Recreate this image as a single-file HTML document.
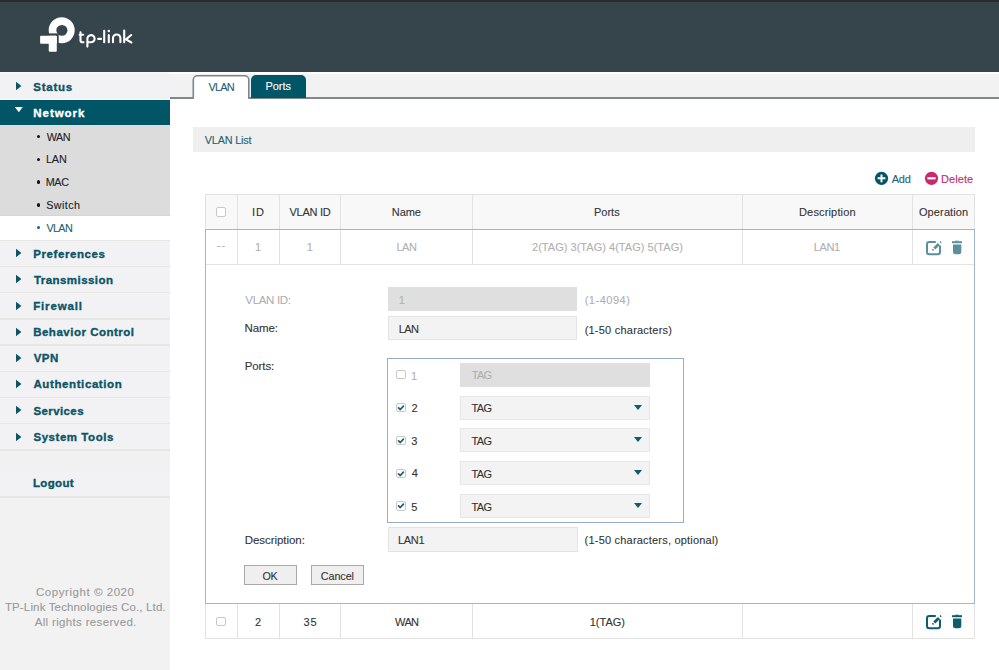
<!DOCTYPE html>
<html><head><meta charset="utf-8"><title>VLAN</title>
<style>
html,body{margin:0;padding:0;width:999px;height:670px;overflow:hidden;background:#fff}
body{position:relative;font-family:"Liberation Sans",sans-serif}
.a{position:absolute;box-sizing:content-box}
.t{position:absolute;white-space:nowrap;line-height:14px}
</style></head><body>
<div class="a" style="left:0px;top:0px;width:999px;height:72px;background:#36444b"></div>
<div class="a" style="left:0px;top:0px;width:999px;height:2px;background:#2a2c2e"></div>
<svg class="a" style="left:0;top:0" width="200" height="72" viewBox="0 0 200 72">
<path fill="#fff" fill-rule="evenodd" d="M48.7 30.25 A13 13 0 1 1 74.7 30.25 A13 13 0 1 1 48.7 30.25 Z M56.3 30.35 A5.6 5.4 0 1 0 67.5 30.35 A5.6 5.4 0 1 0 56.3 30.35 Z"/>
<rect x="38" y="33.4" width="20.7" height="22" fill="#36444b"/>
<rect x="40.1" y="35.65" width="16.7" height="8" rx="1" fill="#fff"/>
<rect x="48.75" y="35.65" width="8.05" height="16.1" rx="1" fill="#fff"/>
<g fill="none" stroke="#fff" stroke-width="2.1" stroke-linecap="round" stroke-linejoin="round">
<path d="M80.5 32.3 V40.2 Q80.5 42.3 82.6 42.3 H83.5 M79.6 34.8 H83.2"/>
<path d="M87.4 46.6 V38.8 A3.6 3.6 0 1 1 91 42.3 H87.6"/>
<path d="M98.2 38.9 H101"/>
<path d="M104.2 30.9 V42.3"/>
<path d="M108.8 35.1 V42.3"/>
<path d="M113 42.3 V38.2 A3.7 3.7 0 0 1 120.4 38.2 V42.3"/>
<path d="M124.2 30.6 V42.3 M131.2 35 L126 39.4 L131.4 42.5"/>
</g>
<circle cx="108.8" cy="31" r="1.25" fill="#fff"/>
</svg>
<div class="a" style="left:0px;top:72px;width:170px;height:598px;background:#f2f2f4"></div>
<div class="a" style="left:0px;top:72px;width:170px;height:2px;background:#f8f8f9"></div>
<svg class="a" style="left:10px;top:76.1px" width="20" height="20" viewBox="10 76.1 20 20"><polygon points="16,81.94999999999999 21.4,86.1 16,90.25" fill="#0b5566"/></svg>
<div class="a" style="left:0px;top:98.6px;width:170px;height:1.4000000000000057px;background:#fbf8f8"></div>
<div class="a" style="left:0px;top:100px;width:170px;height:25px;background:#005566"></div>
<svg class="a" style="left:10px;top:100px" width="20" height="20" viewBox="10 100 20 20"><polygon points="14.8,107 22.8,107 18.8,112.3" fill="#fff"/></svg>
<div class="a" style="left:0px;top:125px;width:170px;height:91px;background:#dcdcdc"></div>
<div class="a" style="left:0px;top:215px;width:170px;height:1px;background:#d5d5d5"></div>
<div class="a" style="left:0px;top:216px;width:170px;height:24px;background:#ffffff"></div>
<div class="a" style="left:36.9px;top:134.8px;width:3.4px;height:3.4px;border-radius:50%;background:#111"></div>
<div class="a" style="left:36.9px;top:157.60000000000002px;width:3.4px;height:3.4px;border-radius:50%;background:#111"></div>
<div class="a" style="left:36.9px;top:180.4px;width:3.4px;height:3.4px;border-radius:50%;background:#111"></div>
<div class="a" style="left:36.9px;top:203.20000000000002px;width:3.4px;height:3.4px;border-radius:50%;background:#111"></div>
<div class="a" style="left:36.9px;top:226.10000000000002px;width:3.4px;height:3.4px;border-radius:50%;background:#1d6172"></div>
<div class="a" style="left:0px;top:239.5px;width:170px;height:1.5px;background:#e6e6e4"></div>
<svg class="a" style="left:10px;top:243.1px" width="20" height="20" viewBox="10 243.1 20 20"><polygon points="16,248.95 21.4,253.1 16,257.25" fill="#0b5566"/></svg>
<div class="a" style="left:0px;top:265.7px;width:170px;height:1.5px;background:#e6e6e4"></div>
<svg class="a" style="left:10px;top:269.4px" width="20" height="20" viewBox="10 269.4 20 20"><polygon points="16,275.25 21.4,279.4 16,283.54999999999995" fill="#0b5566"/></svg>
<div class="a" style="left:0px;top:291.9px;width:170px;height:1.5px;background:#e6e6e4"></div>
<svg class="a" style="left:10px;top:295.59999999999997px" width="20" height="20" viewBox="10 295.59999999999997 20 20"><polygon points="16,301.45 21.4,305.59999999999997 16,309.74999999999994" fill="#0b5566"/></svg>
<div class="a" style="left:0px;top:318.1px;width:170px;height:1.5px;background:#e6e6e4"></div>
<svg class="a" style="left:10px;top:321.8px" width="20" height="20" viewBox="10 321.8 20 20"><polygon points="16,327.65000000000003 21.4,331.8 16,335.95" fill="#0b5566"/></svg>
<div class="a" style="left:0px;top:344.3px;width:170px;height:1.5px;background:#e6e6e4"></div>
<svg class="a" style="left:10px;top:347.8px" width="20" height="20" viewBox="10 347.8 20 20"><polygon points="16,353.65000000000003 21.4,357.8 16,361.95" fill="#0b5566"/></svg>
<div class="a" style="left:0px;top:370.5px;width:170px;height:1.5px;background:#e6e6e4"></div>
<svg class="a" style="left:10px;top:374.2px" width="20" height="20" viewBox="10 374.2 20 20"><polygon points="16,380.05 21.4,384.2 16,388.34999999999997" fill="#0b5566"/></svg>
<div class="a" style="left:0px;top:396.7px;width:170px;height:1.5px;background:#e6e6e4"></div>
<svg class="a" style="left:10px;top:400.3px" width="20" height="20" viewBox="10 400.3 20 20"><polygon points="16,406.15000000000003 21.4,410.3 16,414.45" fill="#0b5566"/></svg>
<div class="a" style="left:0px;top:422.9px;width:170px;height:1.5px;background:#e6e6e4"></div>
<svg class="a" style="left:10px;top:426.59999999999997px" width="20" height="20" viewBox="10 426.59999999999997 20 20"><polygon points="16,432.45 21.4,436.59999999999997 16,440.74999999999994" fill="#0b5566"/></svg>
<div class="a" style="left:0px;top:449.1px;width:170px;height:1.5px;background:#e6e6e4"></div>
<div class="a" style="left:0px;top:451px;width:170px;height:20px;background:#f1f1f1"></div>
<div class="a" style="left:0px;top:496px;width:170px;height:1.5px;background:#e6e6e4"></div>
<div class="a" style="left:0px;top:497.5px;width:170px;height:172.5px;background:#f2f2f2"></div>
<div class="a" style="left:170px;top:74px;width:829px;height:23px;background:#f2f2f2"></div>
<div class="a" style="left:170px;top:97px;width:829px;height:1.5999999999999943px;background:#7d888d"></div>
<svg class="a" style="left:185px;top:70px" width="70" height="32" viewBox="185 70 70 32"><path d="M193.3 98.6 V80 A4.2 4.2 0 0 1 197.5 75.8 H244.6 A4.2 4.2 0 0 1 248.8 80 V98.6" fill="#fff" stroke="#7b868a" stroke-width="1.6"/><rect x="194.2" y="96.9" width="53.8" height="3" fill="#fff"/></svg>
<div class="a" style="left:250.6px;top:74.8px;width:55.4px;height:22.8px;border-radius:5px 5px 0 0;background:#005566"></div>
<div class="a" style="left:192.5px;top:127px;width:782.5px;height:24.599999999999994px;background:#efefef"></div>
<svg class="a" style="left:870px;top:168px" width="110" height="20" viewBox="870 168 110 20">
<circle cx="881.5" cy="178.3" r="6.6" fill="#005566"/>
<path d="M877.6 178.3 H885.4 M881.5 174.4 V182.2" stroke="#fff" stroke-width="2"/>
<circle cx="931.5" cy="178.3" r="6.6" fill="#c8296e"/>
<path d="M927.4 178.3 H935.6" stroke="#fff" stroke-width="2.2"/>
</svg>
<div class="a" style="left:205px;top:194.5px;width:770px;height:35.0px;background:#f8f8f8"></div>
<div class="a" style="left:205px;top:194px;width:770px;height:1px;background:#e2e2e2"></div>
<div class="a" style="left:205px;top:194px;width:1px;height:35.5px;background:#e2e2e2"></div>
<div class="a" style="left:974px;top:194px;width:1px;height:35.5px;background:#e2e2e2"></div>
<div class="a" style="left:236.5px;top:194.5px;width:1.0px;height:69.80000000000001px;background:#e2e2e2"></div>
<div class="a" style="left:236.5px;top:603.5px;width:1.0px;height:34.799999999999955px;background:#e2e2e2"></div>
<div class="a" style="left:278.5px;top:194.5px;width:1.0px;height:69.80000000000001px;background:#e2e2e2"></div>
<div class="a" style="left:278.5px;top:603.5px;width:1.0px;height:34.799999999999955px;background:#e2e2e2"></div>
<div class="a" style="left:340.0px;top:194.5px;width:1.0px;height:69.80000000000001px;background:#e2e2e2"></div>
<div class="a" style="left:340.0px;top:603.5px;width:1.0px;height:34.799999999999955px;background:#e2e2e2"></div>
<div class="a" style="left:471.7px;top:194.5px;width:1.0px;height:69.80000000000001px;background:#e2e2e2"></div>
<div class="a" style="left:471.7px;top:603.5px;width:1.0px;height:34.799999999999955px;background:#e2e2e2"></div>
<div class="a" style="left:741.7px;top:194.5px;width:1.0px;height:69.80000000000001px;background:#e2e2e2"></div>
<div class="a" style="left:741.7px;top:603.5px;width:1.0px;height:34.799999999999955px;background:#e2e2e2"></div>
<div class="a" style="left:912.3px;top:194.5px;width:1.0px;height:69.80000000000001px;background:#e2e2e2"></div>
<div class="a" style="left:912.3px;top:603.5px;width:1.0px;height:34.799999999999955px;background:#e2e2e2"></div>
<div class="a" style="left:205px;top:264px;width:770px;height:1px;background:#e2e2e2"></div>
<div class="a" style="left:205px;top:603.5px;width:1px;height:34.799999999999955px;background:#e2e2e2"></div>
<div class="a" style="left:974px;top:603.5px;width:1px;height:34.799999999999955px;background:#e2e2e2"></div>
<div class="a" style="left:205px;top:638px;width:770px;height:1px;background:#e2e2e2"></div>
<div class="a" style="left:204.6px;top:229px;width:768.8px;height:373.4px;border:1.2px solid #a2b6ca"></div>
<div class="a" style="left:216.3px;top:207.2px;width:7.4px;height:7.4px;border:1.3px solid #c8c8c8;border-radius:2px;background:#fff"></div>
<div class="a" style="left:216.3px;top:616.6px;width:7.4px;height:7.4px;border:1.3px solid #c8c8c8;border-radius:2px;background:#fff"></div>
<svg class="a" style="left:920px;top:238.6px;opacity:0.68" width="50" height="18" viewBox="920 238.6 50 18">
<path d="M935.8 241.5 H929.3 Q927 241.5 927 243.79999999999998 V251.5 Q927 253.79999999999998 929.3 253.79999999999998 H937.7 Q940 253.79999999999998 940 251.5 V245.2" fill="none" stroke="#0f5c6b" stroke-width="2"/>
<path d="M934.3 248.2 L938.9 243.6" stroke="#0f5c6b" stroke-width="2.8"/>
<path d="M932.5 249.9 L933.5 248.9" stroke="#0f5c6b" stroke-width="1.7"/>
<path d="M940.1 242.2 L941.1 241.2" stroke="#0f5c6b" stroke-width="1.5"/>
<rect x="952" y="240.79999999999998" width="10" height="2" fill="#0f5c6b"/>
<rect x="955.3" y="240.29999999999998" width="3.4" height="1" fill="#0f5c6b"/>
<path d="M953 244.0 H961.3 V251.29999999999998 Q961.3 253.79999999999998 958.8 253.79999999999998 H955.5 Q953 253.79999999999998 953 251.29999999999998 Z" fill="#0f5c6b"/>
</svg>
<svg class="a" style="left:920px;top:612.6px;opacity:1" width="50" height="18" viewBox="920 612.6 50 18">
<path d="M935.8 615.5 H929.3 Q927 615.5 927 617.8000000000001 V625.5 Q927 627.8000000000001 929.3 627.8000000000001 H937.7 Q940 627.8000000000001 940 625.5 V619.2" fill="none" stroke="#0f5c6b" stroke-width="2"/>
<path d="M934.3 622.2 L938.9 617.6" stroke="#0f5c6b" stroke-width="2.8"/>
<path d="M932.5 623.9 L933.5 622.9" stroke="#0f5c6b" stroke-width="1.7"/>
<path d="M940.1 616.2 L941.1 615.2" stroke="#0f5c6b" stroke-width="1.5"/>
<rect x="952" y="614.8000000000001" width="10" height="2" fill="#0f5c6b"/>
<rect x="955.3" y="614.3000000000001" width="3.4" height="1" fill="#0f5c6b"/>
<path d="M953 618.0 H961.3 V625.3000000000001 Q961.3 627.8000000000001 958.8 627.8000000000001 H955.5 Q953 627.8000000000001 953 625.3000000000001 Z" fill="#0f5c6b"/>
</svg>
<div class="a" style="left:387.5px;top:287.2px;width:189.89999999999998px;height:24.30000000000001px;background:#dfdfdf"></div>
<div class="a" style="left:387.5px;top:316px;width:187.9px;height:22.4px;border:1px solid #e3e3e3;background:#f3f3f3"></div>
<div class="a" style="left:387.6px;top:527.4px;width:188px;height:22.2px;border:1px solid #e3e3e3;background:#f3f3f3"></div>
<div class="a" style="left:387px;top:358px;width:295px;height:163px;border:1px solid #98afc2;background:#fff"></div>
<div class="a" style="left:460px;top:363px;width:190px;height:24px;background:#dfdfdf"></div>
<div class="a" style="left:396.4px;top:370.1px;width:7.4px;height:7.4px;border:1.3px solid #c8c8c8;border-radius:2px;background:#fff"></div>
<div class="a" style="left:460px;top:396px;width:188px;height:22px;border:1px solid #e6e6e6;background:#f3f3f3"></div>
<div class="a" style="left:634.1px;top:405.1px;width:0;height:0;border-left:4.1px solid transparent;border-right:4.1px solid transparent;border-top:5.0px solid #0f5c6b"></div>
<div class="a" style="left:396.4px;top:402.90000000000003px;width:7.4px;height:7.4px;border:1.3px solid #c8c8c8;border-radius:2px;background:#fff"></div><svg class="a" style="left:396.4px;top:402.90000000000003px" width="10" height="10" viewBox="0 0 10 10"><path d="M2.5 4.9 L4.3 6.5 L7.4 3.1" fill="none" stroke="#16606f" stroke-width="1.7" stroke-linecap="round" stroke-linejoin="round"/></svg>
<div class="a" style="left:460px;top:428px;width:188px;height:22px;border:1px solid #e6e6e6;background:#f3f3f3"></div>
<div class="a" style="left:634.1px;top:437.1px;width:0;height:0;border-left:4.1px solid transparent;border-right:4.1px solid transparent;border-top:5.0px solid #0f5c6b"></div>
<div class="a" style="left:396.4px;top:435.70000000000005px;width:7.4px;height:7.4px;border:1.3px solid #c8c8c8;border-radius:2px;background:#fff"></div><svg class="a" style="left:396.4px;top:435.70000000000005px" width="10" height="10" viewBox="0 0 10 10"><path d="M2.5 4.9 L4.3 6.5 L7.4 3.1" fill="none" stroke="#16606f" stroke-width="1.7" stroke-linecap="round" stroke-linejoin="round"/></svg>
<div class="a" style="left:460px;top:461px;width:188px;height:22px;border:1px solid #e6e6e6;background:#f3f3f3"></div>
<div class="a" style="left:634.1px;top:470.1px;width:0;height:0;border-left:4.1px solid transparent;border-right:4.1px solid transparent;border-top:5.0px solid #0f5c6b"></div>
<div class="a" style="left:396.4px;top:468.5px;width:7.4px;height:7.4px;border:1.3px solid #c8c8c8;border-radius:2px;background:#fff"></div><svg class="a" style="left:396.4px;top:468.5px" width="10" height="10" viewBox="0 0 10 10"><path d="M2.5 4.9 L4.3 6.5 L7.4 3.1" fill="none" stroke="#16606f" stroke-width="1.7" stroke-linecap="round" stroke-linejoin="round"/></svg>
<div class="a" style="left:460px;top:494px;width:188px;height:22px;border:1px solid #e6e6e6;background:#f3f3f3"></div>
<div class="a" style="left:634.1px;top:503.1px;width:0;height:0;border-left:4.1px solid transparent;border-right:4.1px solid transparent;border-top:5.0px solid #0f5c6b"></div>
<div class="a" style="left:396.4px;top:501.3px;width:7.4px;height:7.4px;border:1.3px solid #c8c8c8;border-radius:2px;background:#fff"></div><svg class="a" style="left:396.4px;top:501.3px" width="10" height="10" viewBox="0 0 10 10"><path d="M2.5 4.9 L4.3 6.5 L7.4 3.1" fill="none" stroke="#16606f" stroke-width="1.7" stroke-linecap="round" stroke-linejoin="round"/></svg>
<div class="a" style="left:244.1px;top:565.3px;width:50.599999999999994px;height:18px;border:1px solid #a9a9a9;background:#efefef"></div>
<div class="a" style="left:311.2px;top:565.3px;width:50.69999999999999px;height:18px;border:1px solid #a9a9a9;background:#efefef"></div>
<div class="t" id="s_status" style="left:33.30px;top:79.50px;font-size:11.5px;letter-spacing:0.729px;font-weight:700;color:#0b5566;-webkit-text-stroke:0.35px #0b5566;">Status</div>
<div class="t" id="s_network" style="left:33.33px;top:105.50px;font-size:11.5px;letter-spacing:0.937px;font-weight:700;color:#ffffff;-webkit-text-stroke:0.35px #ffffff;">Network</div>
<div class="t" id="s_wan" style="left:46.63px;top:129.75px;font-size:10.8px;letter-spacing:-0.456px;font-weight:400;color:#222222;-webkit-text-stroke:0.1px #222222;">WAN</div>
<div class="t" id="s_lan" style="left:45.92px;top:152.25px;font-size:10.8px;letter-spacing:-0.080px;font-weight:400;color:#222222;-webkit-text-stroke:0.1px #222222;">LAN</div>
<div class="t" id="s_mac" style="left:45.71px;top:175.25px;font-size:10.8px;letter-spacing:-0.368px;font-weight:400;color:#222222;-webkit-text-stroke:0.1px #222222;">MAC</div>
<div class="t" id="s_switch" style="left:46.16px;top:198.25px;font-size:10.8px;letter-spacing:0.406px;font-weight:400;color:#222222;-webkit-text-stroke:0.1px #222222;">Switch</div>
<div class="t" id="s_vlan" style="left:46.47px;top:221.25px;font-size:10.8px;letter-spacing:-0.656px;font-weight:400;color:#1d6172;-webkit-text-stroke:0.1px #1d6172;">VLAN</div>
<div class="t" id="s_m0" style="left:33.17px;top:246.50px;font-size:11.5px;letter-spacing:0.594px;font-weight:700;color:#0b5566;-webkit-text-stroke:0.35px #0b5566;">Preferences</div>
<div class="t" id="s_m1" style="left:33.89px;top:272.75px;font-size:11.5px;letter-spacing:0.450px;font-weight:700;color:#0b5566;-webkit-text-stroke:0.35px #0b5566;">Transmission</div>
<div class="t" id="s_m2" style="left:33.17px;top:298.75px;font-size:11.5px;letter-spacing:0.850px;font-weight:700;color:#0b5566;-webkit-text-stroke:0.35px #0b5566;">Firewall</div>
<div class="t" id="s_m3" style="left:33.17px;top:325.25px;font-size:11.5px;letter-spacing:0.507px;font-weight:700;color:#0b5566;-webkit-text-stroke:0.35px #0b5566;">Behavior Control</div>
<div class="t" id="s_m4" style="left:33.84px;top:351.25px;font-size:11.5px;letter-spacing:0.360px;font-weight:700;color:#0b5566;-webkit-text-stroke:0.35px #0b5566;">VPN</div>
<div class="t" id="s_m5" style="left:33.48px;top:377.25px;font-size:11.5px;letter-spacing:0.598px;font-weight:700;color:#0b5566;-webkit-text-stroke:0.35px #0b5566;">Authentication</div>
<div class="t" id="s_m6" style="left:33.47px;top:403.50px;font-size:11.5px;letter-spacing:0.396px;font-weight:700;color:#0b5566;-webkit-text-stroke:0.35px #0b5566;">Services</div>
<div class="t" id="s_m7" style="left:33.47px;top:429.75px;font-size:11.5px;letter-spacing:0.541px;font-weight:700;color:#0b5566;-webkit-text-stroke:0.35px #0b5566;">System Tools</div>
<div class="t" id="s_logout" style="left:32.92px;top:476.25px;font-size:11.5px;letter-spacing:0.366px;font-weight:700;color:#0b5566;-webkit-text-stroke:0.35px #0b5566;">Logout</div>
<div class="t" id="c1" style="left:35.95px;top:585.00px;font-size:11.5px;letter-spacing:0.558px;font-weight:400;color:#999999;-webkit-text-stroke:0.1px #999999;">Copyright © 2020</div>
<div class="t" id="c2" style="left:4.88px;top:600.25px;font-size:11.5px;letter-spacing:0.150px;font-weight:400;color:#999999;-webkit-text-stroke:0.1px #999999;">TP-Link Technologies Co., Ltd.</div>
<div class="t" id="c3" style="left:34.73px;top:615.25px;font-size:11.5px;letter-spacing:0.335px;font-weight:400;color:#999999;-webkit-text-stroke:0.1px #999999;">All rights reserved.</div>
<div class="t" id="tab_vlan" style="left:208.53px;top:80.00px;font-size:11px;letter-spacing:-0.854px;font-weight:400;color:#1d6172;-webkit-text-stroke:0.1px #1d6172;">VLAN</div>
<div class="t" id="tab_ports" style="left:265.45px;top:79.25px;font-size:11px;letter-spacing:-0.049px;font-weight:400;color:#ffffff;-webkit-text-stroke:0.1px #ffffff;">Ports</div>
<div class="t" id="vlanlist" style="left:204.77px;top:132.50px;font-size:10.8px;letter-spacing:-0.157px;font-weight:400;color:#1d6172;-webkit-text-stroke:0.1px #1d6172;">VLAN List</div>
<div class="t" id="add" style="left:891.66px;top:171.73px;font-size:11px;letter-spacing:-0.188px;font-weight:400;color:#1d6172;-webkit-text-stroke:0.1px #1d6172;">Add</div>
<div class="t" id="delete" style="left:940.90px;top:171.50px;font-size:11px;letter-spacing:0.108px;font-weight:400;color:#c8296e;-webkit-text-stroke:0.1px #c8296e;">Delete</div>
<div class="t" id="h_id" style="left:251.89px;top:204.50px;font-size:11px;letter-spacing:0.974px;font-weight:400;color:#333333;-webkit-text-stroke:0.1px #333333;">ID</div>
<div class="t" id="h_vid" style="left:289.48px;top:204.50px;font-size:11px;letter-spacing:-0.268px;font-weight:400;color:#333333;-webkit-text-stroke:0.1px #333333;">VLAN ID</div>
<div class="t" id="h_name" style="left:391.79px;top:204.50px;font-size:11px;letter-spacing:-0.051px;font-weight:400;color:#333333;-webkit-text-stroke:0.1px #333333;">Name</div>
<div class="t" id="h_ports" style="left:594.00px;top:204.50px;font-size:11px;letter-spacing:0.001px;font-weight:400;color:#333333;-webkit-text-stroke:0.1px #333333;">Ports</div>
<div class="t" id="h_desc" style="left:799.00px;top:204.50px;font-size:11px;letter-spacing:0.159px;font-weight:400;color:#333333;-webkit-text-stroke:0.1px #333333;">Description</div>
<div class="t" id="h_op" style="left:918.94px;top:204.50px;font-size:11px;letter-spacing:0.121px;font-weight:400;color:#333333;-webkit-text-stroke:0.1px #333333;">Operation</div>
<div class="t" id="r1_chk" style="left:216.85px;top:238.25px;font-size:11px;letter-spacing:1.000px;font-weight:400;color:#b0b0b0;-webkit-text-stroke:0.1px #b0b0b0;">--</div>
<div class="t" id="r1_id" style="left:255.01px;top:239.80px;font-size:11px;letter-spacing:0.300px;font-weight:400;color:#b0b0b0;-webkit-text-stroke:0.1px #b0b0b0;">1</div>
<div class="t" id="r1_vid" style="left:306.68px;top:239.80px;font-size:11px;letter-spacing:0.300px;font-weight:400;color:#b0b0b0;-webkit-text-stroke:0.1px #b0b0b0;">1</div>
<div class="t" id="r1_name" style="left:396.41px;top:239.80px;font-size:11px;letter-spacing:-0.428px;font-weight:400;color:#b0b0b0;-webkit-text-stroke:0.1px #b0b0b0;">LAN</div>
<div class="t" id="r1_ports" style="left:532.04px;top:239.80px;font-size:11px;letter-spacing:0.028px;font-weight:400;color:#b0b0b0;-webkit-text-stroke:0.1px #b0b0b0;">2(TAG) 3(TAG) 4(TAG) 5(TAG)</div>
<div class="t" id="r1_desc" style="left:813.83px;top:239.80px;font-size:11px;letter-spacing:-0.380px;font-weight:400;color:#b0b0b0;-webkit-text-stroke:0.1px #b0b0b0;">LAN1</div>
<div class="t" id="r2_id" style="left:254.92px;top:614.50px;font-size:11px;letter-spacing:0.300px;font-weight:400;color:#333333;-webkit-text-stroke:0.1px #333333;">2</div>
<div class="t" id="r2_vid" style="left:303.41px;top:614.50px;font-size:11px;letter-spacing:1.000px;font-weight:400;color:#333333;-webkit-text-stroke:0.1px #333333;">35</div>
<div class="t" id="r2_name" style="left:395.07px;top:614.50px;font-size:11px;letter-spacing:-0.653px;font-weight:400;color:#333333;-webkit-text-stroke:0.1px #333333;">WAN</div>
<div class="t" id="r2_ports" style="left:589.73px;top:614.50px;font-size:11px;letter-spacing:0.002px;font-weight:400;color:#333333;-webkit-text-stroke:0.1px #333333;">1(TAG)</div>
<div class="t" id="f_vid" style="left:245.35px;top:292.50px;font-size:11.5px;letter-spacing:-0.340px;font-weight:400;color:#b0b0b0;-webkit-text-stroke:0.1px #b0b0b0;">VLAN ID:</div>
<div class="t" id="f_name" style="left:244.62px;top:321.25px;font-size:11.5px;letter-spacing:-0.122px;font-weight:400;color:#333333;-webkit-text-stroke:0.1px #333333;">Name:</div>
<div class="t" id="f_ports" style="left:244.63px;top:358.75px;font-size:11.5px;letter-spacing:-0.074px;font-weight:400;color:#333333;-webkit-text-stroke:0.1px #333333;">Ports:</div>
<div class="t" id="f_desc" style="left:244.63px;top:532.50px;font-size:11.5px;letter-spacing:-0.046px;font-weight:400;color:#333333;-webkit-text-stroke:0.1px #333333;">Description:</div>
<div class="t" id="i_vid" style="left:398.77px;top:293.25px;font-size:11px;letter-spacing:0.300px;font-weight:400;color:#b0b0b0;-webkit-text-stroke:0.1px #b0b0b0;">1</div>
<div class="t" id="i_name" style="left:398.70px;top:321.50px;font-size:11px;letter-spacing:-0.619px;font-weight:400;color:#333333;-webkit-text-stroke:0.1px #333333;">LAN</div>
<div class="t" id="i_desc" style="left:398.00px;top:532.50px;font-size:11px;letter-spacing:-0.291px;font-weight:400;color:#333333;-webkit-text-stroke:0.1px #333333;">LAN1</div>
<div class="t" id="hint1" style="left:584.63px;top:293.00px;font-size:11px;letter-spacing:0.531px;font-weight:400;color:#b0b0b0;-webkit-text-stroke:0.1px #b0b0b0;">(1-4094)</div>
<div class="t" id="hint2" style="left:584.64px;top:322.50px;font-size:11px;letter-spacing:0.226px;font-weight:400;color:#333333;-webkit-text-stroke:0.1px #333333;">(1-50 characters)</div>
<div class="t" id="hint3" style="left:584.62px;top:532.50px;font-size:11px;letter-spacing:0.200px;font-weight:400;color:#333333;-webkit-text-stroke:0.1px #333333;">(1-50 characters, optional)</div>
<div class="t" id="p_n0" style="left:410.93px;top:368.50px;font-size:11px;letter-spacing:0.300px;font-weight:400;color:#b0b0b0;-webkit-text-stroke:0.1px #b0b0b0;">1</div>
<div class="t" id="p_tag0" style="left:471.87px;top:367.50px;font-size:11px;letter-spacing:-0.817px;font-weight:400;color:#b0b0b0;-webkit-text-stroke:0.1px #b0b0b0;">TAG</div>
<div class="t" id="p_n1" style="left:411.57px;top:400.50px;font-size:11px;letter-spacing:0.300px;font-weight:400;color:#333333;-webkit-text-stroke:0.1px #333333;">2</div>
<div class="t" id="p_tag1" style="left:471.62px;top:400.50px;font-size:11px;letter-spacing:-0.663px;font-weight:400;color:#333333;-webkit-text-stroke:0.1px #333333;">TAG</div>
<div class="t" id="p_n2" style="left:411.29px;top:433.50px;font-size:11px;letter-spacing:0.300px;font-weight:400;color:#333333;-webkit-text-stroke:0.1px #333333;">3</div>
<div class="t" id="p_tag2" style="left:471.62px;top:433.50px;font-size:11px;letter-spacing:-0.663px;font-weight:400;color:#333333;-webkit-text-stroke:0.1px #333333;">TAG</div>
<div class="t" id="p_n3" style="left:411.78px;top:466.48px;font-size:11px;letter-spacing:0.300px;font-weight:400;color:#333333;-webkit-text-stroke:0.1px #333333;">4</div>
<div class="t" id="p_tag3" style="left:471.62px;top:466.50px;font-size:11px;letter-spacing:-0.663px;font-weight:400;color:#333333;-webkit-text-stroke:0.1px #333333;">TAG</div>
<div class="t" id="p_n4" style="left:411.34px;top:499.50px;font-size:11px;letter-spacing:0.300px;font-weight:400;color:#333333;-webkit-text-stroke:0.1px #333333;">5</div>
<div class="t" id="p_tag4" style="left:471.62px;top:499.50px;font-size:11px;letter-spacing:-0.663px;font-weight:400;color:#333333;-webkit-text-stroke:0.1px #333333;">TAG</div>
<div class="t" id="b_ok" style="left:262.61px;top:568.50px;font-size:10.8px;letter-spacing:-0.554px;font-weight:400;color:#333333;-webkit-text-stroke:0.1px #333333;">OK</div>
<div class="t" id="b_cancel" style="left:320.81px;top:568.50px;font-size:10.8px;letter-spacing:-0.088px;font-weight:400;color:#333333;-webkit-text-stroke:0.1px #333333;">Cancel</div>
</body></html>
